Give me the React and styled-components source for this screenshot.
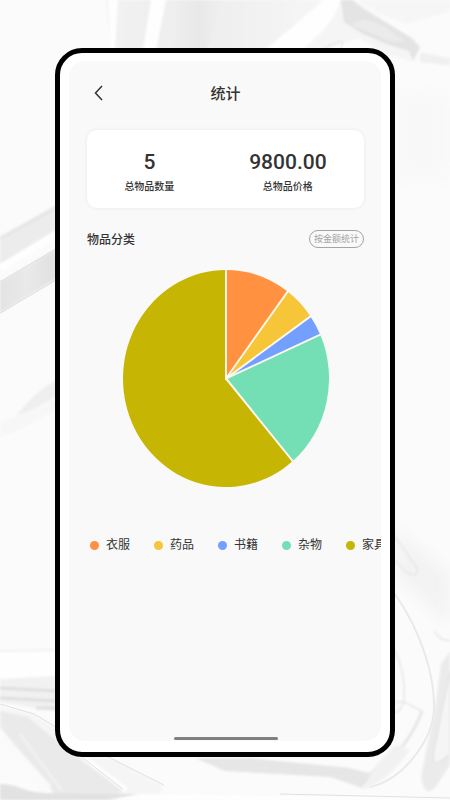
import styled, { createGlobalStyle } from "styled-components";

const GlobalStyle = createGlobalStyle`
  * {
    box-sizing: border-box;
  }
  body {
    margin: 0;
    color: #333;
    font-family: Roboto, "Noto Sans CJK SC", sans-serif;
  }
`;

const Page = styled.div`
  position: relative;
  display: flex;
  min-height: 100vh;
  padding: 48px 55px 43px;
  background: #fbfbfb;
  overflow: hidden;
`;

const Backdrop = styled.svg`
  position: absolute;
  inset: 0;
  width: 100%;
  height: 100%;
  opacity: 0.85;
`;

const Phone = styled.div`
  position: relative;
  flex: 1;
  min-width: 0;
  display: flex;
  padding: 8px 9px 11px;
  background: white;
  border: solid 5px black;
  border-radius: 27px;
`;

const Screen = styled.main`
  flex: 1;
  min-width: 0;
  display: flex;
  flex-direction: column;
  padding: 0 17px 0 18px;
  background: #f9f9f9;
  border-radius: 16px;
  overflow: hidden;
`;

const Header = styled.header`
  display: grid;
  grid-template-columns: 22px 1fr 22px;
  align-items: center;
  height: 64px;
`;

const BackButton = styled.button`
  display: flex;
  justify-content: center;
  padding: 0;
  border: none;
  background: none;
  color: #333;
`;

const Title = styled.h1`
  margin: 0;
  padding-top: 2px;
  font-size: 15px;
  font-weight: 500;
  line-height: 24px;
  text-align: center;
`;

const Summary = styled.section`
  display: flex;
  justify-content: space-around;
  margin-top: 5px;
  padding: 19px 0 12px;
  background: white;
  border-radius: 10px;
  box-shadow: 0 0 4px #00000012;
`;

const Stat = styled.div`
  text-align: center;
`;

const StatValue = styled.p`
  margin: 0;
  font-size: 21px;
  font-weight: 500;
  line-height: 26px;
`;

const StatLabel = styled.p`
  margin: 0;
  padding-top: 3px;
  font-size: 10px;
  font-weight: 500;
  line-height: 18px;
`;

const SectionHeader = styled.div`
  display: flex;
  align-items: center;
  justify-content: space-between;
  margin-top: 21px;
`;

const SectionTitle = styled.h2`
  margin: 0;
  padding-top: 2px;
  font-size: 12px;
  font-weight: 500;
  line-height: 18px;
`;

const ModeButton = styled.button`
  height: 18px;
  padding: 0 4px;
  background: none;
  border: solid 1px #a4a4a4;
  border-radius: 9px;
  color: #a4a4a4;
  font-family: inherit;
  font-size: 9px;
  line-height: 16px;
`;

const Chart = styled.svg`
  align-self: center;
  width: 206px;
  height: 217px;
  margin-top: 21px;
`;

const Legend = styled.ul`
  display: flex;
  gap: 24px;
  margin: 48px -17px 0 0;
  padding: 0 0 0 3px;
  list-style: none;
  overflow-x: auto;
  scrollbar-width: none;
`;

const LegendItem = styled.li`
  flex: none;
  display: flex;
  align-items: center;
  gap: 7px;
  font-size: 12px;
  line-height: 20px;
`;

const Dot = styled.span`
  width: 9px;
  height: 9px;
  border-radius: 50%;
  background: ${(props) => props.$color};
`;

const HomeBar = styled.div`
  align-self: center;
  width: 104px;
  height: 3px;
  margin: auto 0 1px;
  border-radius: 2px;
  background: #808080;
`;

const categories = [
  { name: "衣服", amount: 1000, color: "#ff9141" },
  { name: "药品", amount: 500, color: "#f6c538" },
  { name: "书籍", amount: 300, color: "#739fff" },
  { name: "杂物", amount: 2000, color: "#74dfb5" },
  { name: "家具", amount: 6000, color: "#c6b503" },
];

const total = categories.reduce((sum, item) => sum + item.amount, 0);

function pointAt(amount) {
  const angle = (amount / total) * Math.PI * 2;
  return `${100 * Math.sin(angle)} ${-100 * Math.cos(angle)}`;
}

function PieChart() {
  let start = 0;
  const slices = categories.map((item) => {
    const end = start + item.amount;
    const large = item.amount > total / 2 ? 1 : 0;
    const d = `M0 0L${pointAt(start)}A100 100 0 ${large} 1 ${pointAt(end)}Z`;
    start = end;
    return { ...item, d, edge: pointAt(end) };
  });

  return (
    <Chart
      viewBox="-100 -100 200 200"
      preserveAspectRatio="none"
      role="img"
      aria-label="物品分类"
    >
      {slices.map((slice) => (
        <path key={slice.name} d={slice.d} fill={slice.color} />
      ))}
      {slices.map((slice) => (
        <path
          key={slice.name}
          d={`M0 0L${slice.edge}`}
          stroke="#fdf9ee"
          strokeWidth="1.8"
          strokeLinecap="round"
        />
      ))}
    </Chart>
  );
}

// Folds of pale glossy fabric behind the phone
function Folds() {
  return (
    <Backdrop viewBox="0 0 450 800" preserveAspectRatio="none" aria-hidden="true">
      <defs>
        <filter id="soft">
          <feGaussianBlur stdDeviation="1.3" />
        </filter>
        <filter id="wide" x="-50%" y="-50%" width="200%" height="200%">
          <feGaussianBlur stdDeviation="8" />
        </filter>
        <linearGradient id="sheet" x1="0" y1="0" x2="1" y2="0">
          <stop offset="0" stopColor="#f1f1f1" />
          <stop offset="0.4" stopColor="#ececec" />
          <stop offset="1" stopColor="#f6f6f6" />
        </linearGradient>
        <linearGradient id="column" x1="0" y1="0" x2="1" y2="0">
          <stop offset="0" stopColor="#ececec" />
          <stop offset="0.5" stopColor="#e6e6e6" />
          <stop offset="1" stopColor="#efefef" />
        </linearGradient>
        <linearGradient id="band" x1="0" y1="0" x2="1" y2="0">
          <stop offset="0" stopColor="#e0e0e0" />
          <stop offset="0.5" stopColor="#e6e6e6" />
          <stop offset="1" stopColor="#dcdcdc" />
        </linearGradient>
      </defs>

      {/* top */}
      <g filter="url(#soft)">
        <path d="M106 0H325L265 50H111Z" fill="url(#sheet)" />
        <path d="M108 0H118L115 50H111Z" fill="#fff" />
        <path d="M151 0H166L156 50H143Z" fill="#fff" />
        <path d="M176 0H226L207 50H174Z" fill="url(#column)" />
        <path d="M324 0H340C337 15 327 27 305 50H266Z" fill="#fff" />
        <path d="M340 0H355L420 45L415 62L385 54L360 38L325 50H303C327 28 337 15 340 0Z" fill="#f4f4f4" />
        <path d="M357 0H450V12L405 24L380 14Z" fill="#f6f6f6" />
        <path d="M341 0H352L365 10L412 38L420 48L413 60L409 51L389 45L363 34L344 22Z" fill="#e0e0e0" />
        <path d="M350 25L364 19L382 25L406 42L389 41L370 32Z" fill="#e9e9e9" />
        <path d="M324 48L338 42L343 42L341 49" fill="none" stroke="#dcdcdc" />
        <path d="M420 52L450 58V66L420 62Z" fill="#efefef" />
      </g>
      <path d="M395 90H450V180H395Z" fill="#f8f8f8" filter="url(#wide)" />

      {/* left */}
      <g filter="url(#soft)">
        <path d="M0 236L56 205V230L0 265Z" fill="#eaeaea" />
        <path d="M0 239L56 208" stroke="#dedede" strokeWidth="2" />
        <path d="M0 268L56 234" stroke="#fff" strokeWidth="7" />
        <path d="M0 282L56 249V279L0 313Z" fill="url(#band)" />
        <path d="M16 416Q35 391 56 380V396Q36 410 16 416Z" fill="#ededed" />
        <path d="M0 422Q30 414 56 397V410Q25 429 0 438Z" fill="#f7f7f7" />
      </g>
      <path d="M0 282L56 249M0 313L56 280" stroke="#d8d8d8" strokeWidth="1" />

      {/* bottom left */}
      <g filter="url(#soft)">
        <path d="M0 651L56 650V680H0Z" fill="#fff" />
        <path d="M0 651L56 650" stroke="#f0f0f0" strokeWidth="2" />
        <path d="M0 679L56 676V712L0 702Z" fill="#f0f0f0" />
        <path d="M0 688L56 691M0 698L56 701M36 708H56" stroke="#dadada" strokeWidth="3" />
        <path d="M0 706L34 714L60 730L110 757L163 785L160 794H60L0 720Z" fill="#f5f5f5" />
        <path d="M0 711L28 717L70 752L125 790L110 797H57L0 727Z" fill="#e8e8e8" />
        <path d="M0 738L47 790" stroke="#fafafa" strokeWidth="12" />
        <path d="M20 734L62 791" stroke="#f2f2f2" strokeWidth="2" />
        <path d="M83 757L126 790" stroke="#fff" strokeWidth="5" />
        <path d="M0 784C20 784 22 793 50 793L138 794L110 800H0Z" fill="#dedede" />
      </g>
      <path d="M0 704L34 714L56 727M108 757L164 785M83 758L123 789" fill="none" stroke="#dcdcdc" strokeWidth="1" />

      {/* bottom right */}
      <path d="M395 528L450 575V625L395 575Z" fill="#f1f1f1" filter="url(#wide)" />
      <path d="M195 758H250L350 768L376 775L362 788L330 777L225 771Z" fill="#e3e3e3" filter="url(#soft)" />
      <path d="M395 594C424 636 435 680 434 710C432 742 402 780 370 787" fill="none" stroke="#e7e7e7" strokeWidth="2" />
      <g filter="url(#soft)" fill="none" stroke="#e3e3e3">
        <path d="M395 537L417 568Q419 578 407 573L395 560" strokeWidth="1.5" />
        <path d="M434 631L441 639L450 641M395 650Q406 675 404 700Q402 710 395 713M395 702H404L422 711" strokeWidth="1.5" />
        <path d="M422 711Q407 752 370 774" strokeWidth="3" />
      </g>
      <g filter="url(#soft)">
        <path d="M450 651L441 664L435 708L421 776Q424 798 435 788L450 765Z" fill="#e9e9e9" />
        <path d="M450 672L442 710L434 751Q432 767 439 762L450 754Z" fill="#f5f5f5" stroke="#dadada" />
        <path d="M362 790L376 765L395 745L410 750Q390 780 362 790Z" fill="#f0f0f0" />
        <path d="M145 795L300 796L450 799V800H110Z" fill="#fff" />
      </g>
      <path d="M280 794L450 798" stroke="#dcdcdc" strokeWidth="1" />
    </Backdrop>
  );
}

export default function App() {
  return (
    <Page>
      <GlobalStyle />
      <Folds />
      <Phone>
        <Screen>
          <Header>
            <BackButton type="button" aria-label="返回">
              <svg width="9" height="16" viewBox="0 0 9 16" fill="none">
                <path d="M8 1L1.5 8L8 15" stroke="currentColor" strokeWidth="1.5" />
              </svg>
            </BackButton>
            <Title>统计</Title>
          </Header>
          <Summary>
            <Stat>
              <StatValue>5</StatValue>
              <StatLabel>总物品数量</StatLabel>
            </Stat>
            <Stat>
              <StatValue>9800.00</StatValue>
              <StatLabel>总物品价格</StatLabel>
            </Stat>
          </Summary>
          <SectionHeader>
            <SectionTitle>物品分类</SectionTitle>
            <ModeButton type="button">按金额统计</ModeButton>
          </SectionHeader>
          <PieChart />
          <Legend>
            {categories.map((item) => (
              <LegendItem key={item.name}>
                <Dot $color={item.color} />
                {item.name}
              </LegendItem>
            ))}
          </Legend>
          <HomeBar />
        </Screen>
      </Phone>
    </Page>
  );
}
